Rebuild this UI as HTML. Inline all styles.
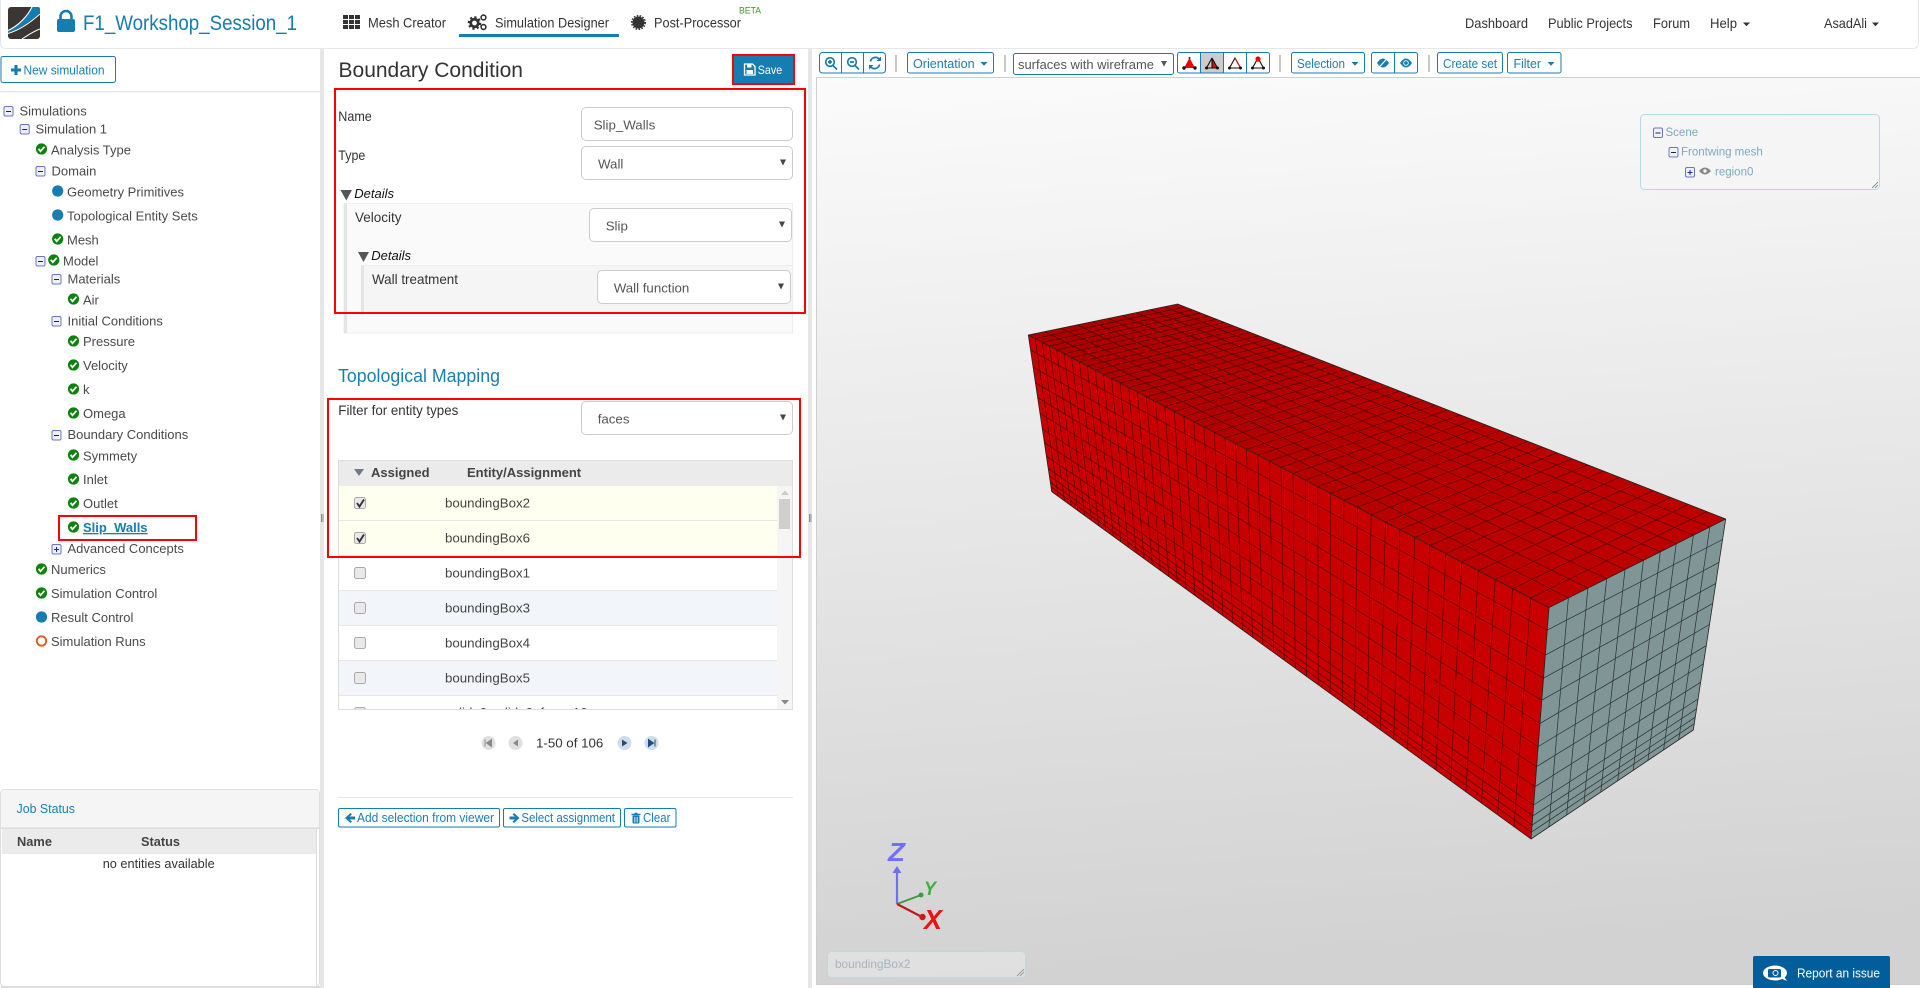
<!DOCTYPE html>
<html lang="en"><head><meta charset="utf-8"><title>Boundary Condition - F1_Workshop_Session_1</title>
<style>
html,body{margin:0;padding:0;width:1920px;height:988px;overflow:hidden;background:#fff}
svg{display:block;font-family:"Liberation Sans",sans-serif}
text{white-space:pre}
.tr{font-size:13px;fill:#4a4a4a}
.n{font-size:14px;fill:#333}
.l{font-size:14px;fill:#333}
.v{font-size:13.3px;fill:#555}
.b{font-size:12.5px;fill:#1a7fb0}
.h{font-size:13px;font-weight:bold;fill:#444}
.d{font-size:13px;font-style:italic;fill:#111}
.c{font-size:13.3px;fill:#444}
.s{font-size:11.5px;fill:#7ba9c0}
.btn{fill:#fff;stroke:#157db0;stroke-width:1}
.sel{fill:#fff;stroke:#ccc;stroke-width:1}
.red{fill:none;stroke:#f00;stroke-width:2}
.sep{stroke:#b9b6b2;stroke-width:1.5}
</style></head><body>
<svg width="1920" height="988" viewBox="0 0 1920 988" xmlns="http://www.w3.org/2000/svg">
<defs>
<linearGradient id="bg" x1="0" y1="0" x2="0.08" y2="1"><stop offset="0" stop-color="#fbfbfb"/><stop offset="1" stop-color="#d2d2d2"/></linearGradient>
<linearGradient id="tp" gradientUnits="userSpaceOnUse" x1="1028" y1="335" x2="1549" y2="608"><stop offset="0" stop-color="#ab0000"/><stop offset="1" stop-color="#bc0000"/></linearGradient>
<g id="chk"><circle r="5.6" fill="#0a830a"/><path d="M-3-.2L-1,2.2L3-2.2" fill="none" stroke="#fff" stroke-width="1.8"/></g>
<g id="dot"><circle r="5.6" fill="#157db0"/></g>
<g id="min"><rect x="-4.5" y="-4.5" width="9" height="9.5" rx="1.5" fill="#eef0fa" stroke="#6a76c2"/><path d="M-2.5,.5H2.5" stroke="#223" stroke-width="1"/></g>
<g id="pls"><rect x="-4.5" y="-4.5" width="9" height="9.5" rx="1.5" fill="#eef0fa" stroke="#6a76c2"/><path d="M-2.5,.5H2.5M0-2V3" stroke="#22a" stroke-width="1"/></g>
<path id="arr" d="M-3-3H3L0,3Z" fill="#444"/>
<path id="car" d="M-3.5-2H3.5L0,1.8Z" fill="#157db0"/>
<g id="cb"><rect x=".5" y=".5" width="11" height="11" rx="2" fill="#e9e9e9" stroke="#a9a9a9"/></g>
</defs>

<!-- header -->
<rect x=".5" y="-6" width="1918" height="54.5" rx="5" fill="#fff" stroke="#e7e7e7"/>
<rect x="8" y="7" width="32" height="32" rx="3" fill="#3b3632"/>
<path d="M32,7H38a2,2 0 0 1 2,2V13C31,21 20,29 8,33V31C18,27 27,18 32,7Z" fill="#157db0"/>
<path d="M8,30.500C18,26 27,17 32,7" fill="none" stroke="#fff" stroke-width="1.100"/>
<path d="M8,33.500C20,30 31,22 40,14" fill="none" stroke="#fff" stroke-width="1"/>
<path d="M22,39C28,35 34,31 40,29" fill="none" stroke="#fff" stroke-width="1"/>
<rect x="57" y="19" width="18" height="13" rx="2" fill="#157db0"/>
<path d="M60.5,20V16.500a5.500,5.500 0 0 1 11,0V20" fill="none" stroke="#157db0" stroke-width="2.600"/>
<text x="83" y="30" font-size="21.500" fill="#157db0" textLength="214" lengthAdjust="spacingAndGlyphs">F1_Workshop_Session_1</text>

<g fill="#333"><rect x="343" y="15" width="5" height="4"/><rect x="349" y="15" width="5" height="4"/><rect x="355" y="15" width="5" height="4"/><rect x="343" y="20" width="5" height="4"/><rect x="349" y="20" width="5" height="4"/><rect x="355" y="20" width="5" height="4"/><rect x="343" y="25" width="5" height="4"/><rect x="349" y="25" width="5" height="4"/><rect x="355" y="25" width="5" height="4"/></g>
<text class="n" x="368" y="27.500" textLength="78" lengthAdjust="spacingAndGlyphs">Mesh Creator</text>
<g fill="none" stroke="#333"><circle cx="474.500" cy="23" r="3.800" stroke-width="2.800"/><circle cx="474.500" cy="23" r="5.800" stroke-width="2" stroke-dasharray="2.200 2.300"/><circle cx="483.500" cy="17.500" r="2.400" stroke-width="1.600"/><circle cx="483.500" cy="27" r="2.400" stroke-width="1.600"/></g>
<text class="n" x="495" y="27.500" textLength="114" lengthAdjust="spacingAndGlyphs">Simulation Designer</text>
<rect x="459" y="34" width="160" height="3" fill="#157db0"/>
<circle cx="638.500" cy="22.500" r="6" fill="#333"/><circle cx="638.500" cy="22.500" r="6.800" fill="none" stroke="#333" stroke-width="1.500" stroke-dasharray="1.600 1.400"/>
<text class="n" x="654" y="27.500" textLength="87" lengthAdjust="spacingAndGlyphs">Post-Processor</text>
<text x="739" y="13.500" font-size="9.500" fill="#3a9a1e" textLength="22" lengthAdjust="spacingAndGlyphs">BETA</text>
<text class="n" x="1465" y="28" textLength="63" lengthAdjust="spacingAndGlyphs">Dashboard</text>
<text class="n" x="1548" y="28" textLength="84.500" lengthAdjust="spacingAndGlyphs">Public Projects</text>
<text class="n" x="1653" y="28" textLength="37" lengthAdjust="spacingAndGlyphs">Forum</text>
<text class="n" x="1710" y="28" textLength="27" lengthAdjust="spacingAndGlyphs">Help</text>
<path d="M1743,22.500H1750L1746.500,26.300Z" fill="#333"/>
<text class="n" x="1824" y="28" textLength="43" lengthAdjust="spacingAndGlyphs">AsadAli</text>
<path d="M1872,22.500H1879L1875.500,26.300Z" fill="#333"/>

<!-- gutters -->
<rect x="320" y="49" width="4" height="939" fill="#e6e6e6"/>
<rect x="808" y="49" width="4" height="939" fill="#e6e6e6"/>
<path d="M321.500,514V522M323,514V522M809.500,514V522M811,514V522" stroke="#777" stroke-width=".8"/>

<!-- left panel -->
<rect class="btn" x="1" y="56.500" width="114.500" height="26" rx="2"/>
<path d="M11,70H21M16,65V75" stroke="#157db0" stroke-width="3"/>
<text x="23.500" y="74.500" font-size="13" fill="#1a7fb0" textLength="81" lengthAdjust="spacingAndGlyphs">New simulation</text>
<rect x="0" y="91" width="320" height="1.500" fill="#e7e7e7"/>

<use href="#min" x="8.500" y="111"/><text class="tr" x="19.500" y="115.500">Simulations</text>
<use href="#min" x="24.700" y="129"/><text class="tr" x="35.500" y="133.500">Simulation 1</text>
<use href="#chk" x="41.500" y="149"/><text class="tr" x="51" y="154.500">Analysis Type</text>
<use href="#min" x="40.500" y="171"/><text class="tr" x="51.500" y="175.500">Domain</text>
<use href="#dot" x="57.700" y="191"/><text class="tr" x="67" y="196.500">Geometry Primitives</text>
<use href="#dot" x="57.700" y="215"/><text class="tr" x="67" y="220.500">Topological Entity Sets</text>
<use href="#chk" x="57.700" y="239"/><text class="tr" x="67" y="244.500">Mesh</text>
<use href="#min" x="40.500" y="261"/><use href="#chk" x="53.800" y="260"/><text class="tr" x="63" y="265.500">Model</text>
<use href="#min" x="56.500" y="279"/><text class="tr" x="67.500" y="283.500">Materials</text>
<use href="#chk" x="73.500" y="299"/><text class="tr" x="83" y="304.500">Air</text>
<use href="#min" x="56.500" y="321"/><text class="tr" x="67.500" y="325.500">Initial Conditions</text>
<use href="#chk" x="73.500" y="341"/><text class="tr" x="83" y="346">Pressure</text>
<use href="#chk" x="73.500" y="365"/><text class="tr" x="83" y="370">Velocity</text>
<use href="#chk" x="73.500" y="389"/><text class="tr" x="83" y="394">k</text>
<use href="#chk" x="73.500" y="413"/><text class="tr" x="83" y="418">Omega</text>
<use href="#min" x="56.500" y="435"/><text class="tr" x="67.500" y="439">Boundary Conditions</text>
<use href="#chk" x="73.500" y="455"/><text class="tr" x="83" y="460.500">Symmety</text>
<use href="#chk" x="73.500" y="479"/><text class="tr" x="83" y="484">Inlet</text>
<use href="#chk" x="73.500" y="503"/><text class="tr" x="83" y="508">Outlet</text>
<use href="#chk" x="73.500" y="527"/><text x="83" y="532" font-size="13" font-weight="bold" fill="#157db0" text-decoration="underline">Slip_Walls</text>
<rect class="red" x="59" y="516" width="137" height="24"/>
<use href="#pls" x="56.500" y="549"/><text class="tr" x="67.500" y="553">Advanced Concepts</text>
<use href="#chk" x="41.500" y="569"/><text class="tr" x="51" y="574">Numerics</text>
<use href="#chk" x="41.500" y="593"/><text class="tr" x="51" y="598">Simulation Control</text>
<use href="#dot" x="41.500" y="617"/><text class="tr" x="51" y="622">Result Control</text>
<circle cx="41.500" cy="641" r="4.700" fill="none" stroke="#e2591c" stroke-width="1.800"/><text class="tr" x="51" y="646">Simulation Runs</text>

<!-- job status -->
<rect x=".5" y="789.500" width="319" height="197" rx="4" fill="#fff" stroke="#ddd" stroke-width="1"/>
<path d="M1,828V793a3,3 0 0 1 3-3H316a3,3 0 0 1 3,3V828Z" fill="#f5f5f5"/>
<rect x="1" y="827.500" width="318" height="1.500" fill="#ddd"/>
<text x="16.500" y="813" font-size="13" fill="#1a7fb0" textLength="58.500" lengthAdjust="spacingAndGlyphs">Job Status</text>
<rect x="2" y="829" width="314" height="25" fill="#ebebeb"/>
<rect x="316" y="829" width="1" height="157" fill="#ddd"/>
<rect x="1" y="986" width="319" height="2" fill="#ddd"/>
<text class="h" x="17" y="846" textLength="35" lengthAdjust="spacingAndGlyphs">Name</text>
<text class="h" x="141" y="846" textLength="39" lengthAdjust="spacingAndGlyphs">Status</text>
<text x="102.700" y="868" font-size="13" fill="#333" textLength="112" lengthAdjust="spacingAndGlyphs">no entities available</text>

<!-- center panel -->
<text x="338.500" y="77" font-size="21.500" fill="#333" textLength="184.500" lengthAdjust="spacingAndGlyphs">Boundary Condition</text>
<rect x="328" y="91" width="480" height="1" fill="#eee"/>
<rect x="734" y="55.500" width="60" height="28" fill="#157db0"/>
<rect class="red" x="733" y="55" width="61" height="29"/>
<path d="M744.500,64H752.500L755,66.500V75H744.500Z" fill="none" stroke="#fff" stroke-width="1.300"/><rect x="747" y="64" width="4.500" height="3.500" fill="#fff"/><rect x="746.500" y="70" width="6.500" height="4" fill="#fff"/>
<text x="757.700" y="74" font-size="12" fill="#fff" textLength="24.500" lengthAdjust="spacingAndGlyphs">Save</text>

<text class="l" x="338.300" y="121" textLength="33.500" lengthAdjust="spacingAndGlyphs">Name</text>
<rect class="sel" x="581.500" y="107.500" width="211" height="33" rx="4.500"/>
<text class="v" x="593.700" y="129.500">Slip_Walls</text>
<text class="l" x="338.300" y="160" textLength="27" lengthAdjust="spacingAndGlyphs">Type</text>
<rect class="sel" x="581.500" y="146.500" width="211" height="33" rx="4.500"/>
<text class="v" x="598" y="168.500">Wall</text><use href="#arr" x="783" y="162.500"/>
<path d="M340.500,190H352L346.300,200.500Z" fill="#555"/>
<text class="d" x="354.300" y="198">Details</text>
<rect x="344" y="203.500" width="448.500" height="129.500" fill="#fafafa" stroke="#eee" stroke-width="1"/>
<rect x="344" y="203.500" width="3" height="129.500" fill="#e4e4e4"/>
<text class="l" x="355" y="222" textLength="46.500" lengthAdjust="spacingAndGlyphs">Velocity</text>
<rect class="sel" x="589.500" y="208.500" width="202" height="33" rx="4.500"/>
<text class="v" x="605.700" y="230.500">Slip</text><use href="#arr" x="782" y="224.500"/>
<path d="M358,252H369L363.500,262Z" fill="#555"/>
<text class="d" x="371.300" y="260">Details</text>
<rect x="361" y="265.500" width="431" height="49" fill="#f5f5f5"/>
<rect x="361" y="265" width="431" height="1" fill="#eee"/>
<rect x="361" y="265.500" width="3" height="49" fill="#e4e4e4"/>
<text class="l" x="372" y="284" textLength="86" lengthAdjust="spacingAndGlyphs">Wall treatment</text>
<rect class="sel" x="597.500" y="270.500" width="193" height="33" rx="4.500"/>
<text class="v" x="613.700" y="292.500">Wall function</text><use href="#arr" x="781" y="286.500"/>
<rect class="red" x="335" y="89" width="470" height="224"/>

<text x="338" y="382" font-size="18.500" fill="#1a7fb0" textLength="162" lengthAdjust="spacingAndGlyphs">Topological Mapping</text>
<text class="l" x="338.300" y="415" textLength="120" lengthAdjust="spacingAndGlyphs">Filter for entity types</text>
<rect class="sel" x="581.500" y="401.500" width="211" height="33" rx="4.500"/>
<text class="v" x="597.700" y="423.500">faces</text><use href="#arr" x="783" y="417.500"/>

<!-- table -->
<rect x="338.500" y="460.500" width="454" height="249" fill="#fff" stroke="#ddd"/>
<rect x="339" y="461" width="453" height="25" fill="#ebebeb"/>
<path d="M354,469H364L359,476Z" fill="#6f7b8b"/>
<text class="h" x="371" y="477">Assigned</text>
<text class="h" x="467" y="477">Entity/Assignment</text>
<rect x="339" y="486" width="438" height="34.500" fill="#fffff0"/>
<rect x="339" y="521" width="438" height="34.500" fill="#fffff0"/>
<rect x="339" y="556" width="438" height="34" fill="#fff"/>
<rect x="339" y="590.500" width="438" height="35" fill="#f2f5fa"/>
<rect x="339" y="626" width="438" height="34" fill="#fff"/>
<rect x="339" y="660.500" width="438" height="35" fill="#f2f5fa"/>
<path d="M339,520.500H777M339,555.500H777M339,590.500H777M339,625.500H777M339,660.500H777M339,695.500H777" stroke="#e6e6e6"/>
<rect x="777" y="486" width="15" height="223" fill="#f5f5f5"/>
<path d="M781,495H789L785,490.500Z" fill="#ccc"/>
<rect x="779" y="499" width="11" height="30" fill="#cfcfcb"/>
<path d="M781,700H789L785,704.500Z" fill="#888"/>
<use href="#cb" x="354" y="497"/><path d="M357,503L359.500,506.500L364,499.500" fill="none" stroke="#333" stroke-width="1.900"/>
<use href="#cb" x="354" y="532"/><path d="M357,538L359.500,541.500L364,534.500" fill="none" stroke="#333" stroke-width="1.900"/>
<use href="#cb" x="354" y="567"/><use href="#cb" x="354" y="602"/><use href="#cb" x="354" y="637"/><use href="#cb" x="354" y="672"/>
<text class="c" x="445" y="507.500">boundingBox2</text>
<text class="c" x="445" y="542.500">boundingBox6</text>
<text class="c" x="445" y="577.500">boundingBox1</text>
<text class="c" x="445" y="612.500">boundingBox3</text>
<text class="c" x="445" y="647.500">boundingBox4</text>
<text class="c" x="445" y="682.500">boundingBox5</text>
<svg x="339" y="696" width="438" height="13"><use href="#cb" x="15" y="11"/><text class="c" x="106" y="21">solid_0:solid_0_face_10</text></svg>
<rect class="red" x="328" y="399" width="472" height="158"/>

<!-- pager -->
<circle cx="488.500" cy="743" r="7" fill="#e0e0e0"/><path d="M485,739.500V746.500M491.500,739.500L486.500,743L491.500,746.500Z" stroke="#888" fill="#888"/>
<circle cx="515.500" cy="743" r="7" fill="#e0e0e0"/><path d="M518,739.500L513,743L518,746.500Z" fill="#888"/>
<text class="c" x="536" y="747.500" style="fill:#333">1-50 of 106</text>
<circle cx="624.500" cy="743" r="7" fill="#cfdcea"/><path d="M622,739.500L627.500,743L622,746.500Z" fill="#1f4f7a"/>
<circle cx="651.500" cy="743" r="7" fill="#cfdcea"/><path d="M648.500,739.500L653.500,743L648.500,746.500ZM655,739.500V746.500" fill="#1f4f7a" stroke="#1f4f7a"/>

<rect x="338" y="797" width="455" height="1" fill="#e7e7e7"/>
<rect class="btn" x="338.500" y="808.500" width="161" height="18.500" rx="1.500"/>
<path d="M350.500,813L345,818L350.500,823L352,821.500L349.500,819.500H355V816.500H349.500L352,814.500Z" fill="#157db0"/>
<text class="b" x="357" y="822" textLength="137" lengthAdjust="spacingAndGlyphs">Add selection from viewer</text>
<rect class="btn" x="503.500" y="808.500" width="117" height="18.500" rx="1.500"/>
<path d="M514,813L519.500,818L514,823L512.500,821.500L515,819.500H509.500V816.500H515L512.500,814.500Z" fill="#157db0"/>
<text class="b" x="521.400" y="822" textLength="93.500" lengthAdjust="spacingAndGlyphs">Select assignment</text>
<rect class="btn" x="624.500" y="808.500" width="51.500" height="18.500" rx="1.500"/>
<path d="M631.500,814.500H640.500M634.500,813.500H637.500" fill="none" stroke="#157db0" stroke-width="1.400"/><rect x="632.500" y="815.500" width="7" height="8" rx="1" fill="#157db0"/><path d="M634.500,817V822.500M636,817V822.500M637.500,817V822.500" stroke="#fff" stroke-width=".6"/>
<text class="b" x="643" y="822" textLength="27.500" lengthAdjust="spacingAndGlyphs">Clear</text>

<!-- viewer toolbar -->
<rect x="819.500" y="52.500" width="66" height="20.500" rx="3" class="btn"/>
<path d="M841.500,52.500V73M863.500,52.500V73" stroke="#157db0"/>
<g fill="none" stroke="#157db0" stroke-width="1.700"><circle cx="830" cy="62" r="4.300"/><path d="M833,65.500L837,69.500M828,62H832M830,60V64"/><circle cx="852" cy="62" r="4.300"/><path d="M855,65.500L859,69.500M850,62H854"/><path d="M879.500,59.500A5,5 0 0 0 870.500,61.500M870.500,66.500A5,5 0 0 0 879.500,64.500"/></g>
<path d="M881,56.500V61H876.500ZM869,69.500V65H873.500Z" fill="#157db0"/>
<path d="M896,55V72M1005,55V72M1280,55V72M1429,55V72" class="sep"/>
<rect class="btn" x="907.500" y="52.500" width="86" height="20.500" rx="2"/>
<text class="b" x="913" y="68" textLength="61.600" lengthAdjust="spacingAndGlyphs">Orientation</text><use href="#car" x="984" y="64"/>
<rect x="1013.500" y="53.500" width="160" height="21" rx="2" fill="#fff" stroke="#157db0"/>
<text class="v" x="1018" y="69" textLength="136" lengthAdjust="spacingAndGlyphs">surfaces with wireframe</text><path d="M1161,61H1167L1164,66.500Z" fill="#555"/>
<rect class="btn" x="1177.500" y="52.500" width="92" height="20.500" rx="2"/>
<rect x="1200.500" y="53" width="23" height="19.500" fill="#ccc"/>
<path d="M1200.500,52.500V73M1223.500,52.500V73M1246.500,52.500V73" stroke="#157db0"/>
<g>
<path d="M1189.500,58L1195,68H1184Z" fill="#f00000"/><circle cx="1189.500" cy="58" r="1" fill="#600"/><circle cx="1184" cy="68" r="1.700" fill="#111"/><circle cx="1195" cy="68" r="1.700" fill="#111"/>
<path d="M1212,58L1217.500,68H1212Z" fill="#f00000"/><path d="M1212,58L1206.500,68H1217.500L1212,58V68" fill="none" stroke="#111" stroke-width="1.100"/><circle cx="1206.500" cy="68" r="1.500" fill="#111"/><circle cx="1217.500" cy="68" r="1.500" fill="#111"/>
<path d="M1235,58L1240.500,68H1229.500Z" fill="#fff" stroke="#111" stroke-width="1.100"/><path d="M1235,58L1240,67" stroke="#e00" stroke-width="1"/><circle cx="1229.500" cy="68" r="1.500" fill="#111"/><circle cx="1240.500" cy="68" r="1.500" fill="#111"/>
<path d="M1258,58L1263.500,68H1252.500Z" fill="#fff" stroke="#111" stroke-width="1.100"/><circle cx="1258" cy="59" r="2.600" fill="#f00000"/><circle cx="1252.500" cy="68" r="1.500" fill="#111"/><circle cx="1263.500" cy="68" r="1.500" fill="#111"/>
</g>
<rect class="btn" x="1291.500" y="52.500" width="73" height="20.500" rx="2"/>
<text class="b" x="1297" y="68" textLength="48" lengthAdjust="spacingAndGlyphs">Selection</text><use href="#car" x="1355" y="64"/>
<rect class="btn" x="1371.500" y="52.500" width="46" height="20.500" rx="2"/>
<path d="M1394.500,52.500V73" stroke="#157db0"/>
<path d="M1377,63Q1383,54 1389,63Q1383,72 1377,63Z" fill="#157db0"/><path d="M1378,68.500L1388,57.500" stroke="#fff" stroke-width="1.300"/>
<path d="M1400,63Q1406,54 1412,63Q1406,72 1400,63Z" fill="#157db0"/><circle cx="1406" cy="63" r="2.300" fill="none" stroke="#fff" stroke-width=".9"/>
<rect class="btn" x="1437.500" y="52.500" width="65" height="20.500" rx="2"/>
<text class="b" x="1443" y="68" textLength="54" lengthAdjust="spacingAndGlyphs">Create set</text>
<rect class="btn" x="1507.500" y="52.500" width="53.500" height="20.500" rx="2"/>
<text class="b" x="1513.500" y="68" textLength="27.500" lengthAdjust="spacingAndGlyphs">Filter</text><use href="#car" x="1551" y="64"/>

<!-- viewer -->
<rect x="816" y="77" width="1104" height="907" fill="url(#bg)"/>
<path d="M816.500,984V77.500H1920" fill="none" stroke="#cfcfcf"/>
<rect x="816" y="984" width="1104" height="1" fill="#ccc"/>

<path d="M1028.300,335L1177.700,304L1725.700,519L1549,607.700Z" fill="url(#tp)"/>
<path d="M1028.300,335L1549,607.700L1531,839L1051.700,491.700Z" fill="#c80000"/>
<path d="M1549,607.700L1725.700,519L1693.300,730L1531,839Z" fill="#809595"/>
<path id="m1" d="" fill="none" stroke="#200000" stroke-width=".65" stroke-opacity=".7"/>
<path id="m2" d="" fill="none" stroke="#101616" stroke-width=".7" stroke-opacity=".8"/>
<path d="M1028.300,335L1177.700,304L1725.700,519L1693.300,730L1531,839L1051.700,491.700ZM1549,607.700L1531,839M1549,607.700L1725.700,519M1549,607.700L1028.300,335" fill="none" stroke="#222" stroke-width=".8"/>

<rect x="1640.500" y="114.500" width="239" height="75" rx="4" fill="#f5f5f5" fill-opacity=".7" stroke="#b5d9e8"/>
<path d="M1872,188L1878,182M1875,188L1878,185" stroke="#777" stroke-width=".8"/>
<use href="#min" x="1658" y="132.500"/><text class="s" x="1665.500" y="136">Scene</text>
<use href="#min" x="1673.500" y="152"/><text class="s" x="1681" y="155.500">Frontwing mesh</text>
<use href="#pls" x="1690" y="172"/>
<path d="M1699,171Q1705,164 1711,171Q1705,178 1699,171Z" fill="#888"/><circle cx="1705" cy="171" r="1.700" fill="#f5f5f5"/>
<text class="s" x="1715" y="175.500">region0</text>

<!-- axes -->
<path d="M897,904V870" stroke="#7070ee" stroke-width="2.200"/><path d="M892.500,873L897,866L901.500,873Z" fill="#7070ee"/>
<text x="888" y="861" font-size="26" font-weight="bold" font-style="italic" fill="#7070ff" textLength="17" lengthAdjust="spacingAndGlyphs">Z</text>
<path d="M897,904L921,895" stroke="#3f9a3f" stroke-width="1.900"/><circle cx="921" cy="895" r="2.500" fill="#3f9a3f"/>
<text x="924" y="895" font-size="19" font-weight="bold" font-style="italic" fill="#3fb03f" textLength="12" lengthAdjust="spacingAndGlyphs">Y</text>
<path d="M897,904L922,917" stroke="#c01818" stroke-width="2.200"/><circle cx="922.500" cy="917" r="3.200" fill="#d01818"/>
<text x="924" y="929" font-size="28" font-weight="bold" font-style="italic" fill="#e81414" textLength="18" lengthAdjust="spacingAndGlyphs">X</text>

<rect x="827.500" y="951.500" width="198" height="26" rx="4" fill="#fff" fill-opacity=".3" stroke="#c3d6de"/>
<text x="835" y="968" font-size="11.800" fill="#a5b5c0">boundingBox2</text>
<path d="M1017,976L1024,969M1020,976L1024,972" stroke="#888" stroke-width=".8"/>

<path d="M1753,988V958a2,2 0 0 1 2-2H1888a2,2 0 0 1 2,2V988Z" fill="#025e9b"/>
<ellipse cx="1775" cy="973" rx="12" ry="7.500" fill="#fff"/><path d="M1780,978L1787,981L1783,975Z" fill="#fff"/>
<rect x="1768" y="969" width="13" height="8.500" rx="1.500" fill="#025e9b"/><circle cx="1775.500" cy="973" r="2.500" fill="none" stroke="#fff"/>
<text x="1797" y="977.500" font-size="12.500" fill="#fff" textLength="83" lengthAdjust="spacingAndGlyphs">Report an issue</text>
</svg>
<script>
(function(){
var A=[1028.3,335],B=[1177.7,304],D=[1725.7,519],E=[1549,607.7],F=[1531,839],C=[1051.7,491.7],G=[1693.3,730];
function L(a,b,t){return [a[0]+(b[0]-a[0])*t,a[1]+(b[1]-a[1])*t];}
function P(t,k){return t/(t+(1-t)*k);}
function S(p,q){return 'M'+p[0].toFixed(1)+','+p[1].toFixed(1)+'L'+q[0].toFixed(1)+','+q[1].toFixed(1);}
var U=[.11,.22,.326,.43,.534,.63,.72,.817,.91];
var V=[.097,.205,.305,.4,.5,.6,.687,.774,.853,.9,.94,.97];
var N=46,a='',b='',i;
for(i=1;i<N;i++){var t=i/N;var p=P(t,1.65),q=P(t,1.6);
 a+=S(L(A,E,p),L(B,D,q));a+=S(L(A,E,p),L(C,F,p));}
U.forEach(function(u){a+=S(L(A,B,u),L(E,D,u));b+=S(L(E,D,u),L(F,G,u));});
V.forEach(function(v){a+=S(L(A,C,v),L(E,F,v));b+=S(L(E,F,v),L(D,G,v));});
document.getElementById('m1').setAttribute('d',a);
document.getElementById('m2').setAttribute('d',b);
})();
</script>
</body></html>
